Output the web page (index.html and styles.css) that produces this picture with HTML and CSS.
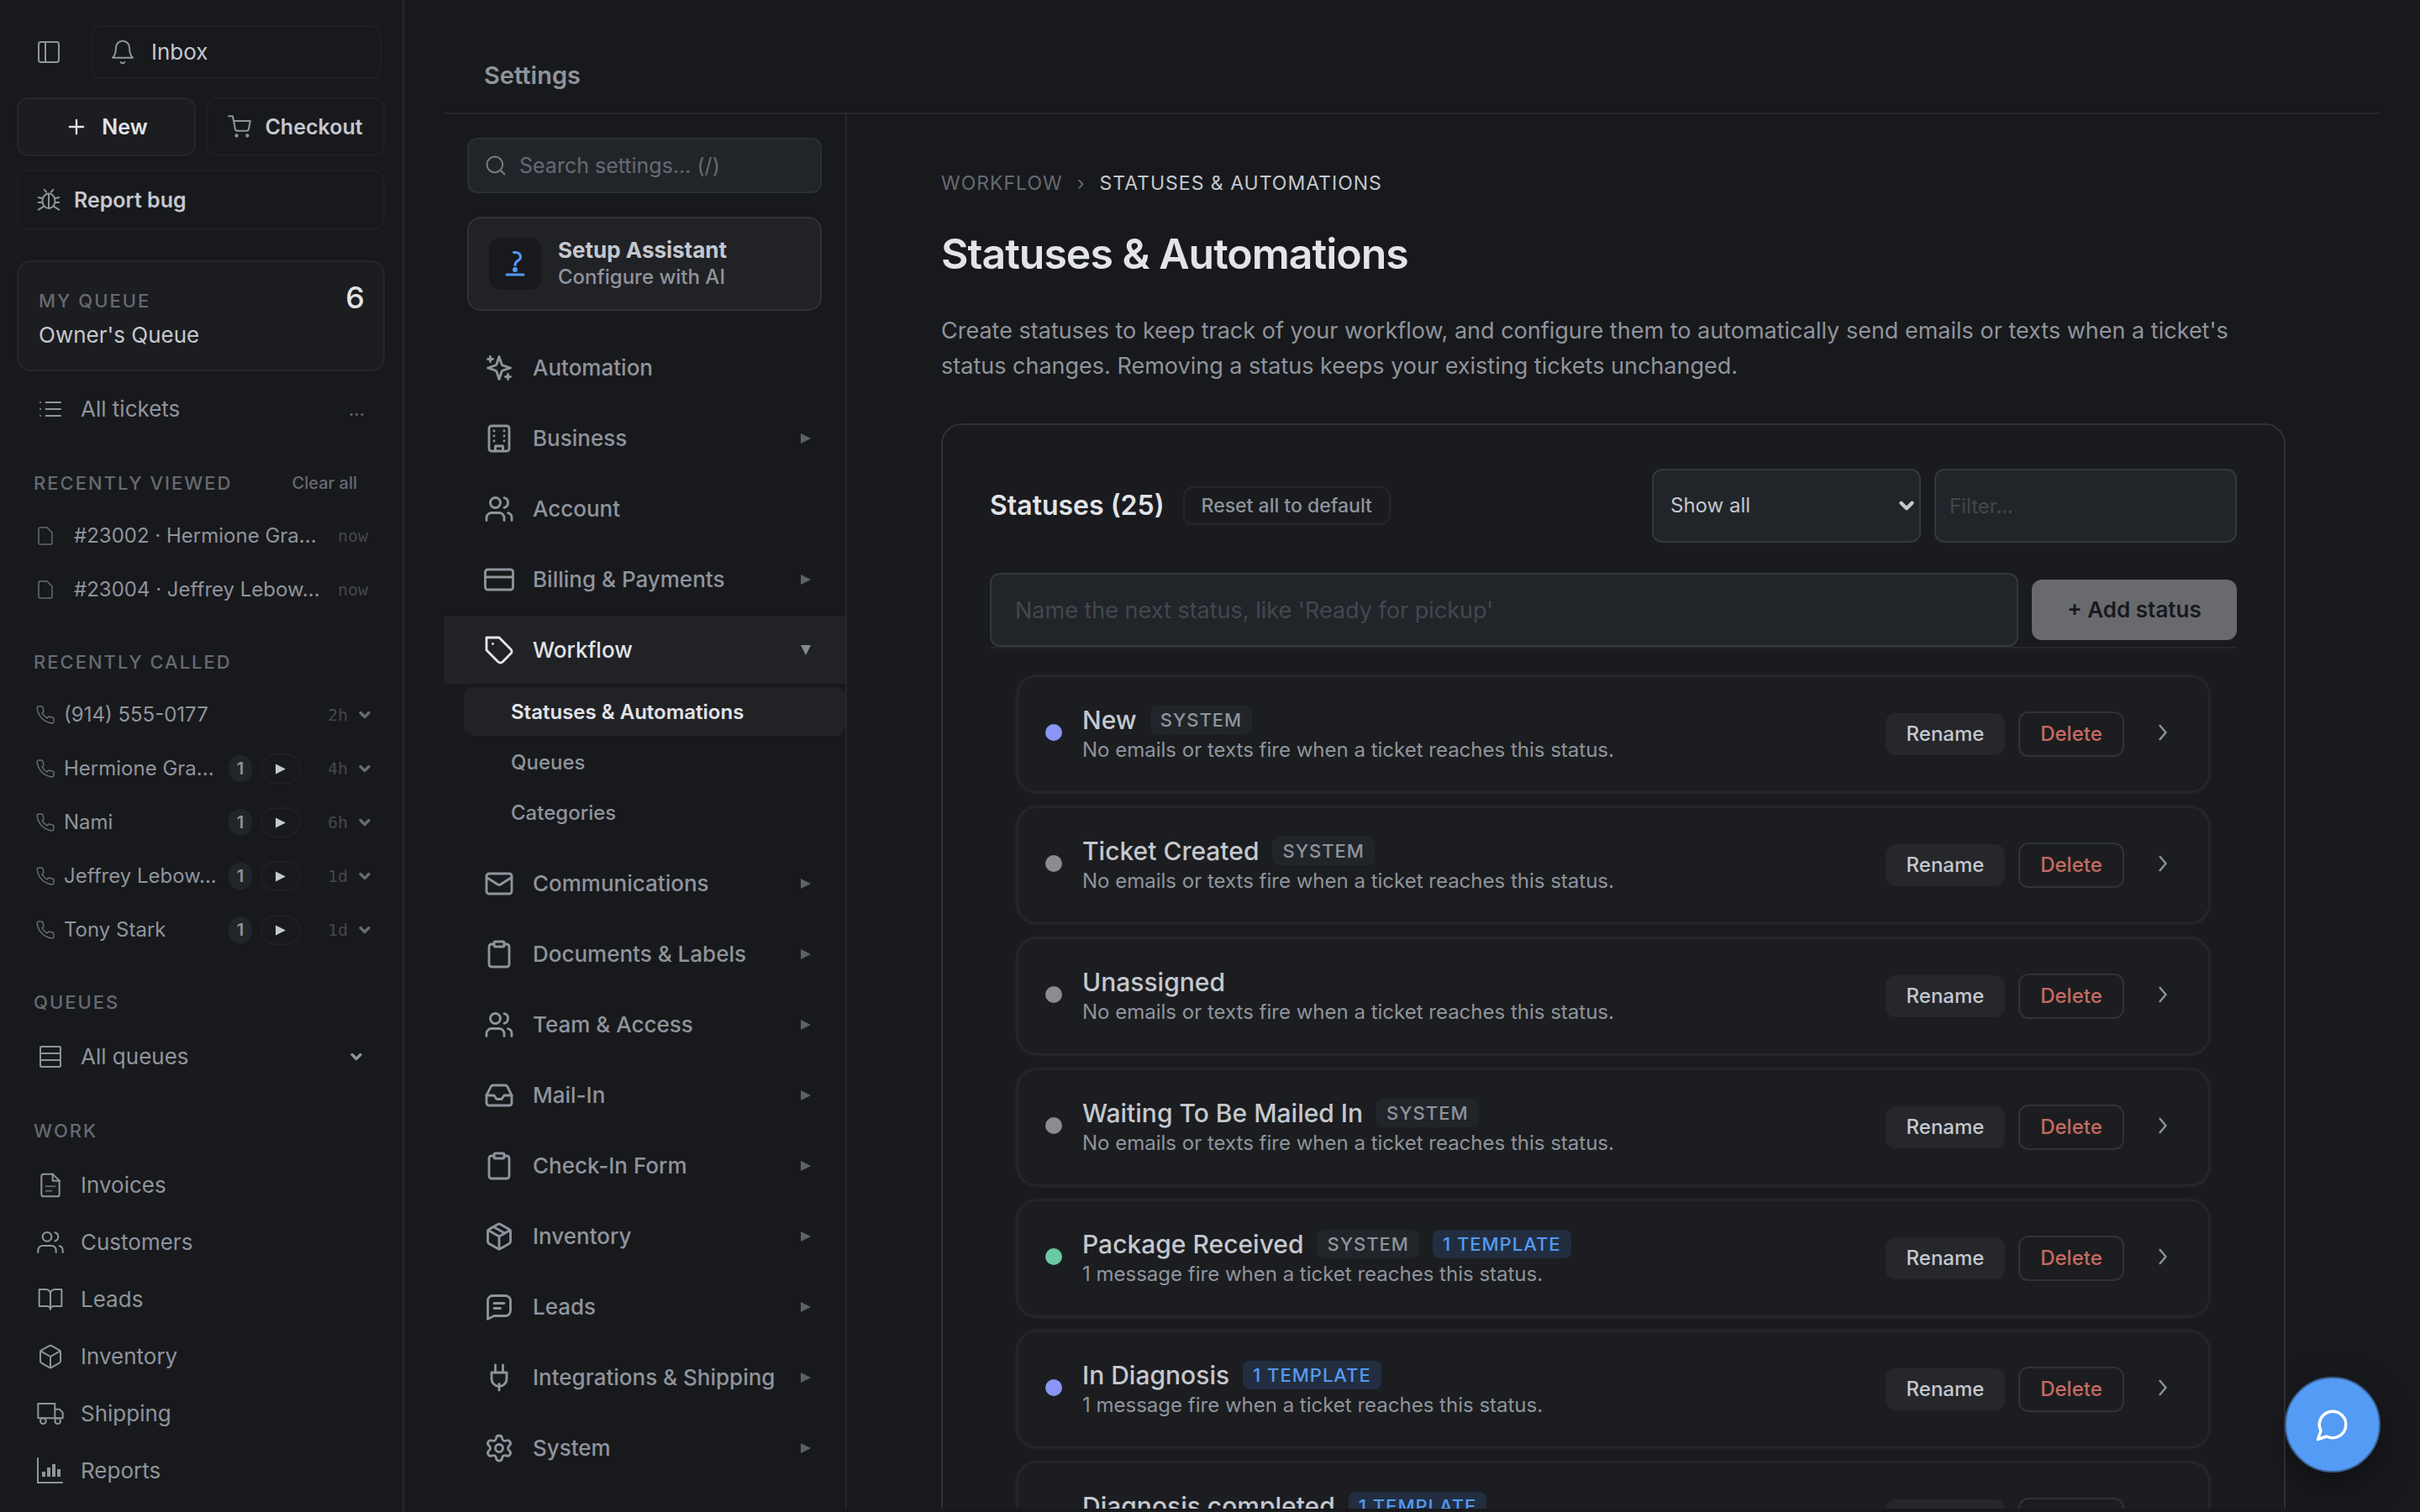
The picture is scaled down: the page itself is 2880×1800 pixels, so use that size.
FILE: index.html
```html
<!DOCTYPE html>
<html lang="en">
<head>
<meta charset="utf-8">
<meta name="viewport" content="width=device-width, initial-scale=1">
<title>Settings - Statuses &amp; Automations</title>
<link rel="stylesheet" href="styles.css">
</head>
<body>
<svg class="sprite" aria-hidden="true">
  <symbol id="i-panel" viewBox="0 0 24 24"><rect x="3" y="3" width="18" height="18" rx="2"/><path d="M9 3v18"/></symbol>
  <symbol id="i-bell" viewBox="0 0 24 24"><path d="M18 8A6 6 0 0 0 6 8c0 7-3 9-3 9h18s-3-2-3-9"/><path d="M13.73 21a2 2 0 0 1-3.46 0"/></symbol>
  <symbol id="i-plus" viewBox="0 0 24 24"><path d="M12 5v14M5 12h14"/></symbol>
  <symbol id="i-cart" viewBox="0 0 24 24"><circle cx="9" cy="21" r="1"/><circle cx="20" cy="21" r="1"/><path d="M1 1h4l2.68 13.39a2 2 0 0 0 2 1.61h9.72a2 2 0 0 0 2-1.61L23 6H6"/></symbol>
  <symbol id="i-bug" viewBox="0 0 24 24"><ellipse cx="12" cy="13" rx="6.5" ry="7.5"/><path d="M12 5.500v15M9.500 4 7.500 1.500M14.500 4l2-2.500M6 10.500 1.500 9.500M5.500 14.500h-4M7 18.500l-5.500 3.500M18 10.500l4.500-1M18.500 14.500h4M17 18.500l5.500 3.500"/></symbol>
  <symbol id="i-list" viewBox="0 0 24 24"><path d="M8 6h13M8 12h13M8 18h13M3 6h.01M3 12h.01M3 18h.01"/></symbol>
  <symbol id="i-page" viewBox="0 0 24 24"><path d="M14 2H6a2 2 0 0 0-2 2v16a2 2 0 0 0 2 2h12a2 2 0 0 0 2-2V8z"/></symbol>
  <symbol id="i-phone" viewBox="0 0 24 24"><path d="M22 16.92v3a2 2 0 0 1-2.18 2 19.79 19.79 0 0 1-8.63-3.07 19.5 19.5 0 0 1-6-6 19.79 19.79 0 0 1-3.07-8.67A2 2 0 0 1 4.11 2h3a2 2 0 0 1 2 1.72c.13.96.36 1.9.7 2.81a2 2 0 0 1-.45 2.11L8.09 9.91a16 16 0 0 0 6 6l1.27-1.27a2 2 0 0 1 2.11-.45c.91.34 1.85.57 2.81.7A2 2 0 0 1 22 16.92z"/></symbol>
  <symbol id="i-chevron" viewBox="0 0 24 24"><path d="m6 9 6 6 6-6"/></symbol>
  <symbol id="i-right" viewBox="0 0 24 24"><path d="m9 5 6 7-6 7"/></symbol>
  <symbol id="i-tri" viewBox="0 0 12 12"><path d="M0 0 12 6 0 12z"/></symbol>
  <symbol id="i-rows" viewBox="0 0 24 24"><rect x="3" y="3" width="18" height="6" rx="1"/><rect x="3" y="9" width="18" height="6" rx="1"/><rect x="3" y="15" width="18" height="6" rx="1"/></symbol>
  <symbol id="i-invoice" viewBox="0 0 24 24"><path d="M14 2H6a2 2 0 0 0-2 2v16a2 2 0 0 0 2 2h12a2 2 0 0 0 2-2V8z"/><path d="M14 2v6h6"/><path d="M8 13h8M8 17h5" opacity=".6"/></symbol>
  <symbol id="i-customers" viewBox="0 0 24 24"><path d="M17 21v-2a4 4 0 0 0-4-4H5a4 4 0 0 0-4 4v2"/><circle cx="9" cy="7" r="4"/><path d="M23 21v-2a4 4 0 0 0-3-3.87M16 3.13a4 4 0 0 1 0 7.75"/></symbol>
  <symbol id="i-book" viewBox="0 0 24 24"><path d="M2 3h6a4 4 0 0 1 4 4v14a3 3 0 0 0-3-3H2zM22 3h-6a4 4 0 0 0-4 4v14a3 3 0 0 1 3-3h7z"/></symbol>
  <symbol id="i-box" viewBox="0 0 24 24"><path d="M21 16V8a2 2 0 0 0-1-1.73l-7-4a2 2 0 0 0-2 0l-7 4A2 2 0 0 0 3 8v8a2 2 0 0 0 1 1.73l7 4a2 2 0 0 0 2 0l7-4A2 2 0 0 0 21 16z"/><path d="M3.3 7 12 12l8.7-5M12 22V12"/></symbol>
  <symbol id="i-truck" viewBox="0 0 24 24"><path d="M1 3h15v13H1zM16 8h4l3 3v5h-7z"/><circle cx="5.5" cy="18.5" r="2.5"/><circle cx="18.5" cy="18.5" r="2.5"/></symbol>
  <symbol id="i-chart" viewBox="0 0 32 32"><path d="M1 1v29h29"/><path d="M8 17v6M14 12v11M20 8v15M26 14v9" stroke-width="4" stroke-linecap="butt"/></symbol>
  <symbol id="i-search" viewBox="0 0 24 24"><circle cx="11" cy="11" r="8"/><path d="m21 21-4.35-4.35"/></symbol>
  <symbol id="i-assist" viewBox="0 0 62 62"><path d="M29.500 17.500c4.500-.5 8 1.500 8 5.500 0 5-6.500 3.500-6.500 9.500"/><path d="M21 44h20"/><circle cx="31" cy="38" r="1.500"/></symbol>
  <symbol id="i-sparkles" viewBox="0 0 24 24"><path d="m12 3-1.912 5.813a2 2 0 0 1-1.275 1.275L3 12l5.813 1.912a2 2 0 0 1 1.275 1.275L12 21l1.912-5.813a2 2 0 0 1 1.275-1.275L21 12l-5.813-1.912a2 2 0 0 1-1.275-1.275L12 3Z"/><path d="M5 3v4M19 17v4M3 5h4M17 19h4"/></symbol>
  <symbol id="i-building" viewBox="0 0 24 24"><rect x="4" y="2" width="16" height="20" rx="2"/><path d="M9 22v-4h6v4M8 6h.01M16 6h.01M8 10h.01M16 10h.01M8 14h.01M16 14h.01"/></symbol>
  <symbol id="i-users" viewBox="0 0 24 24"><path d="M16 21v-2a4 4 0 0 0-4-4H6a4 4 0 0 0-4 4v2"/><circle cx="9" cy="7" r="4"/><path d="M22 21v-2a4 4 0 0 0-3-3.87M16 3.13a4 4 0 0 1 0 7.75"/></symbol>
  <symbol id="i-card" viewBox="0 0 24 24"><rect x="1" y="4" width="22" height="16" rx="2"/><path d="M1 10h22"/></symbol>
  <symbol id="i-tag" viewBox="0 0 24 24"><path d="M12 2H2v10l9.29 9.29c.94.94 2.48.94 3.42 0l6.58-6.58c.94-.94.94-2.48 0-3.42L12 2Z"/><path d="M7 7h.01"/></symbol>
  <symbol id="i-mail" viewBox="0 0 24 24"><rect x="2" y="4" width="20" height="16" rx="2"/><path d="m22 7-8.97 5.7a1.94 1.94 0 0 1-2.06 0L2 7"/></symbol>
  <symbol id="i-clipboard" viewBox="0 0 24 24"><rect x="8" y="2" width="8" height="4" rx="1"/><path d="M16 4h2a2 2 0 0 1 2 2v14a2 2 0 0 1-2 2H6a2 2 0 0 1-2-2V6a2 2 0 0 1 2-2h2"/></symbol>
  <symbol id="i-inbox" viewBox="0 0 24 24"><path d="M22 12h-6l-2 3h-4l-2-3H2"/><path d="M5.45 5.11 2 12v6a2 2 0 0 0 2 2h16a2 2 0 0 0 2-2v-6l-3.45-6.89A2 2 0 0 0 16.76 4H7.24a2 2 0 0 0-1.79 1.11z"/></symbol>
  <symbol id="i-package" viewBox="0 0 24 24"><path d="M21 8a2 2 0 0 0-1-1.73l-7-4a2 2 0 0 0-2 0l-7 4A2 2 0 0 0 3 8v8a2 2 0 0 0 1 1.73l7 4a2 2 0 0 0 2 0l7-4A2 2 0 0 0 21 16Z"/><path d="m3.3 7 8.7 5 8.7-5M12 22V12M7.5 4.27l9 5.15"/></symbol>
  <symbol id="i-message" viewBox="0 0 24 24"><path d="M3 21.500V7a4 4 0 0 1 4-4h10a4 4 0 0 1 4 4v8a4 4 0 0 1-4 4H8z"/><path d="M8 9h8M8 13h5"/></symbol>
  <symbol id="i-plug" viewBox="0 0 24 24"><path d="M9 8V2M15 8V2M12 22v-5M6 8h12v5a6 6 0 0 1-12 0z"/></symbol>
  <symbol id="i-gear" viewBox="0 0 24 24"><path d="M9.671 4.136a2.34 2.34 0 0 1 4.659 0 2.34 2.34 0 0 0 3.319 1.915 2.34 2.34 0 0 1 2.33 4.033 2.34 2.34 0 0 0 0 3.831 2.34 2.34 0 0 1-2.33 4.033 2.34 2.34 0 0 0-3.319 1.915 2.34 2.34 0 0 1-4.659 0 2.34 2.34 0 0 0-3.32-1.915 2.34 2.34 0 0 1-2.33-4.033 2.34 2.34 0 0 0 0-3.831A2.34 2.34 0 0 1 6.35 6.051a2.34 2.34 0 0 0 3.319-1.915"/><circle cx="12" cy="12" r="3"/></symbol>
  <symbol id="i-chat" viewBox="0 0 24 24"><path d="M7.9 20A9 9 0 1 0 4 16.1L2 22Z"/></symbol>
</svg>

<div class="app">
  <aside class="sidebar">
    <div class="top-row">
      <button class="toggle" type="button" aria-label="Toggle sidebar"><svg class="icon i32"><use href="#i-panel"/></svg></button>
      <a class="inbox" href="#"><svg class="icon i32"><use href="#i-bell"/></svg>Inbox</a>
    </div>
    <div class="action-row">
      <button class="action new" type="button"><svg class="icon i28"><use href="#i-plus"/></svg>New</button>
      <button class="action checkout" type="button"><svg class="icon i28"><use href="#i-cart"/></svg>Checkout</button>
    </div>
    <button class="report" type="button"><svg class="icon i28"><use href="#i-bug"/></svg>Report bug</button>
    <a class="my-queue" href="#">
      <span class="my-queue-text"><span class="eyebrow">MY QUEUE</span><span>Owner's Queue</span></span>
      <span class="my-queue-count">6</span>
    </a>
    <a class="side-link all-tickets" href="#"><svg class="icon i32"><use href="#i-list"/></svg>All tickets<span class="trail more">...</span></a>

    <section class="side-section">
      <h2 class="side-label">RECENTLY VIEWED <button class="clear" type="button">Clear all</button></h2>
      <a class="recent" href="#"><svg class="icon i24"><use href="#i-page"/></svg><span class="name">#23002 · Hermione Gra...</span><span class="time">now</span></a>
      <a class="recent" href="#"><svg class="icon i24"><use href="#i-page"/></svg><span class="name">#23004 · Jeffrey Lebow...</span><span class="time">now</span></a>
    </section>

    <section class="side-section">
      <h2 class="side-label">RECENTLY CALLED</h2>
      <div class="call"><svg class="icon i24"><use href="#i-phone"/></svg><span class="name">(914) 555-0177</span><span class="time">2h</span><svg class="icon caret"><use href="#i-chevron"/></svg></div>
      <div class="call"><svg class="icon i24"><use href="#i-phone"/></svg><span class="name">Hermione Gra...</span><span class="count">1</span><button class="play" type="button" aria-label="Play voicemail"><svg class="tri"><use href="#i-tri"/></svg></button><span class="time">4h</span><svg class="icon caret"><use href="#i-chevron"/></svg></div>
      <div class="call"><svg class="icon i24"><use href="#i-phone"/></svg><span class="name">Nami</span><span class="count">1</span><button class="play" type="button" aria-label="Play voicemail"><svg class="tri"><use href="#i-tri"/></svg></button><span class="time">6h</span><svg class="icon caret"><use href="#i-chevron"/></svg></div>
      <div class="call"><svg class="icon i24"><use href="#i-phone"/></svg><span class="name">Jeffrey Lebow...</span><span class="count">1</span><button class="play" type="button" aria-label="Play voicemail"><svg class="tri"><use href="#i-tri"/></svg></button><span class="time">1d</span><svg class="icon caret"><use href="#i-chevron"/></svg></div>
      <div class="call"><svg class="icon i24"><use href="#i-phone"/></svg><span class="name">Tony Stark</span><span class="count">1</span><button class="play" type="button" aria-label="Play voicemail"><svg class="tri"><use href="#i-tri"/></svg></button><span class="time">1d</span><svg class="icon caret"><use href="#i-chevron"/></svg></div>
    </section>

    <section class="side-section">
      <h2 class="side-label">QUEUES</h2>
      <a class="side-link" href="#"><svg class="icon i32"><use href="#i-rows"/></svg>All queues<svg class="icon caret trail"><use href="#i-chevron"/></svg></a>
    </section>

    <section class="side-section">
      <h2 class="side-label">WORK</h2>
      <a class="side-link" href="#"><svg class="icon i32"><use href="#i-invoice"/></svg>Invoices</a>
      <a class="side-link" href="#"><svg class="icon i32"><use href="#i-customers"/></svg>Customers</a>
      <a class="side-link" href="#"><svg class="icon i32"><use href="#i-book"/></svg>Leads</a>
      <a class="side-link" href="#"><svg class="icon i32"><use href="#i-box"/></svg>Inventory</a>
      <a class="side-link" href="#"><svg class="icon i32"><use href="#i-truck"/></svg>Shipping</a>
      <a class="side-link" href="#"><svg class="icon i32 chart"><use href="#i-chart"/></svg>Reports</a>
    </section>
  </aside>

  <div class="workspace">
    <header class="page-head">Settings</header>
    <div class="columns">
      <nav class="settings-nav" aria-label="Settings">
        <label class="search"><svg class="icon i28"><use href="#i-search"/></svg><input type="search" placeholder="Search settings... (/)" aria-label="Search settings"></label>
        <a class="assistant" href="#">
          <span class="assistant-icon"><svg class="icon"><use href="#i-assist"/></svg></span>
          <span class="assistant-text"><strong>Setup Assistant</strong><span>Configure with AI</span></span>
        </a>
        <a class="nav-item" href="#"><svg class="icon i36"><use href="#i-sparkles"/></svg>Automation</a>
        <a class="nav-item" href="#"><svg class="icon i36"><use href="#i-building"/></svg>Business<svg class="tri"><use href="#i-tri"/></svg></a>
        <a class="nav-item" href="#"><svg class="icon i36"><use href="#i-users"/></svg>Account</a>
        <a class="nav-item" href="#"><svg class="icon i36"><use href="#i-card"/></svg>Billing &amp; Payments<svg class="tri"><use href="#i-tri"/></svg></a>
        <a class="nav-item open" href="#"><svg class="icon i36"><use href="#i-tag"/></svg>Workflow<svg class="tri"><use href="#i-tri"/></svg></a>
        <div class="sub-nav">
          <a class="sub-item current" href="#">Statuses &amp; Automations</a>
          <a class="sub-item" href="#">Queues</a>
          <a class="sub-item" href="#">Categories</a>
        </div>
        <a class="nav-item" href="#"><svg class="icon i36"><use href="#i-mail"/></svg>Communications<svg class="tri"><use href="#i-tri"/></svg></a>
        <a class="nav-item" href="#"><svg class="icon i36"><use href="#i-clipboard"/></svg>Documents &amp; Labels<svg class="tri"><use href="#i-tri"/></svg></a>
        <a class="nav-item" href="#"><svg class="icon i36"><use href="#i-users"/></svg>Team &amp; Access<svg class="tri"><use href="#i-tri"/></svg></a>
        <a class="nav-item" href="#"><svg class="icon i36"><use href="#i-inbox"/></svg>Mail-In<svg class="tri"><use href="#i-tri"/></svg></a>
        <a class="nav-item" href="#"><svg class="icon i36"><use href="#i-clipboard"/></svg>Check-In Form<svg class="tri"><use href="#i-tri"/></svg></a>
        <a class="nav-item" href="#"><svg class="icon i36"><use href="#i-package"/></svg>Inventory<svg class="tri"><use href="#i-tri"/></svg></a>
        <a class="nav-item" href="#"><svg class="icon i36"><use href="#i-message"/></svg>Leads<svg class="tri"><use href="#i-tri"/></svg></a>
        <a class="nav-item" href="#"><svg class="icon i36"><use href="#i-plug"/></svg>Integrations &amp; Shipping<svg class="tri"><use href="#i-tri"/></svg></a>
        <a class="nav-item" href="#"><svg class="icon i36"><use href="#i-gear"/></svg>System<svg class="tri"><use href="#i-tri"/></svg></a>
      </nav>

      <main class="content">
        <div class="content-inner">
          <div class="crumbs"><a href="#">WORKFLOW</a><span class="sep">›</span><span class="here">STATUSES &amp; AUTOMATIONS</span></div>
          <h1>Statuses &amp; Automations</h1>
          <p class="intro">Create statuses to keep track of your workflow, and configure them to automatically send emails or texts when a ticket's status changes. Removing a status keeps your existing tickets unchanged.</p>

          <section class="card">
            <div class="card-head">
              <h2>Statuses (25)</h2>
              <button class="reset" type="button">Reset all to default</button>
              <div class="select-wrap"><select aria-label="Show"><option>Show all</option></select><svg class="icon"><use href="#i-chevron"/></svg></div>
              <input class="filter" type="text" placeholder="Filter..." aria-label="Filter statuses">
            </div>
            <form class="add-row">
              <input type="text" placeholder="Name the next status, like 'Ready for pickup'" aria-label="Status name">
              <button type="button">+ Add status</button>
            </form>
            <ul class="statuses">
              <li class="status"><span class="dot indigo"></span><div class="status-text"><div class="status-title">New<span class="badge">SYSTEM</span></div><p>No emails or texts fire when a ticket reaches this status.</p></div><button class="rename" type="button">Rename</button><button class="delete" type="button">Delete</button><svg class="icon go"><use href="#i-right"/></svg></li>
              <li class="status"><span class="dot"></span><div class="status-text"><div class="status-title">Ticket Created<span class="badge">SYSTEM</span></div><p>No emails or texts fire when a ticket reaches this status.</p></div><button class="rename" type="button">Rename</button><button class="delete" type="button">Delete</button><svg class="icon go"><use href="#i-right"/></svg></li>
              <li class="status"><span class="dot"></span><div class="status-text"><div class="status-title">Unassigned</div><p>No emails or texts fire when a ticket reaches this status.</p></div><button class="rename" type="button">Rename</button><button class="delete" type="button">Delete</button><svg class="icon go"><use href="#i-right"/></svg></li>
              <li class="status"><span class="dot"></span><div class="status-text"><div class="status-title">Waiting To Be Mailed In<span class="badge">SYSTEM</span></div><p>No emails or texts fire when a ticket reaches this status.</p></div><button class="rename" type="button">Rename</button><button class="delete" type="button">Delete</button><svg class="icon go"><use href="#i-right"/></svg></li>
              <li class="status"><span class="dot green"></span><div class="status-text"><div class="status-title">Package Received<span class="badge">SYSTEM</span><span class="badge template">1 TEMPLATE</span></div><p>1 message fire when a ticket reaches this status.</p></div><button class="rename" type="button">Rename</button><button class="delete" type="button">Delete</button><svg class="icon go"><use href="#i-right"/></svg></li>
              <li class="status"><span class="dot indigo"></span><div class="status-text"><div class="status-title">In Diagnosis<span class="badge template">1 TEMPLATE</span></div><p>1 message fire when a ticket reaches this status.</p></div><button class="rename" type="button">Rename</button><button class="delete" type="button">Delete</button><svg class="icon go"><use href="#i-right"/></svg></li>
              <li class="status"><span class="dot indigo"></span><div class="status-text"><div class="status-title">Diagnosis completed<span class="badge template">1 TEMPLATE</span></div><p>1 message fire when a ticket reaches this status.</p></div><button class="rename" type="button">Rename</button><button class="delete" type="button">Delete</button><svg class="icon go"><use href="#i-right"/></svg></li>
            </ul>
          </section>
        </div>
      </main>
    </div>
  </div>
  <button class="chat" type="button" aria-label="Open chat"><svg class="icon"><use href="#i-chat"/></svg></button>
</div>
</body>
</html>
```

FILE: styles.css
```css
:root {
  --bg: #18191c;
  --card: #1a1b1e;
  --raised: #1c1d20;
  --field: #212529;
  --active: #212226;
  --line: #26272b;
  --line-soft: #1f2023;
  --line-strong: #303236;
  --text: #e2e4e8;
  --text-2: #c4c8cf;
  --text-3: #8f949d;
  --text-4: #666a73;
  --text-5: #43474f;
  --blue: #539bf5;
}

* { box-sizing: border-box; }

body {
  margin: 0;
  background: var(--bg);
  color: var(--text-3);
  font: 400 26px/32px Inter, "Liberation Sans", sans-serif;
}

button, input, select { font: inherit; color: inherit; margin: 0; }
button { background: none; border: 0; padding: 0; white-space: nowrap; }
a { color: inherit; text-decoration: none; }
h1, h2, p, ul { margin: 0; padding: 0; }
input::placeholder { color: var(--text-5); opacity: 1; }

.sprite { display: none; }
.icon {
  flex: none;
  fill: none;
  stroke: currentColor;
  stroke-width: 1.5;
  stroke-linecap: round;
  stroke-linejoin: round;
}
.i24 { width: 24px; height: 24px; }
.i28 { width: 28px; height: 28px; stroke-width: 1.7; }
.i32 { width: 32px; height: 32px; }
.i36 { width: 36px; height: 36px; stroke-width: 1.9; }
.tri { flex: none; width: 12px; height: 12px; fill: currentColor; }

.app { display: flex; height: 100vh; overflow: hidden; }

/* Sidebar */
.sidebar {
  flex: none;
  width: 482px;
  padding: 30px 20px 0;
  border-right: 4px solid #222327;
  overflow: hidden;
}
.top-row { display: flex; align-items: center; gap: 34px; padding: 0 4px 0 22px; }
.toggle { display: flex; }
.inbox {
  flex: 1;
  display: flex;
  align-items: center;
  gap: 18px;
  height: 64px;
  padding: 0 20px;
  border: 2px solid var(--line-soft);
  border-radius: 12px;
  color: var(--text-2);
}
.inbox .icon, .checkout .icon, .report .icon { color: var(--text-3); }
.action-row { display: flex; gap: 12px; margin-top: 22px; }
.action {
  flex: 1;
  display: flex;
  align-items: center;
  justify-content: center;
  gap: 16px;
  height: 70px;
  border: 2px solid var(--line-soft);
  border-radius: 14px;
  color: var(--text-2);
  font-size: 25px;
  font-weight: 600;
}
.new { background: var(--raised); border-color: var(--line); color: var(--text); }
.new .icon { stroke-width: 2; }
.report {
  display: flex;
  align-items: center;
  gap: 16px;
  width: 100%;
  height: 72px;
  margin-top: 16px;
  padding: 0 22px;
  border: 2px solid var(--line-soft);
  border-radius: 14px;
  color: var(--text-2);
  font-size: 25px;
  font-weight: 600;
}
.my-queue {
  display: flex;
  justify-content: space-between;
  height: 132px;
  margin-top: 36px;
  padding: 26px 22px 0 24px;
  background: var(--raised);
  border: 2px solid var(--line);
  border-radius: 16px;
  color: var(--text-2);
}
.my-queue-text { display: flex; flex-direction: column; gap: 9px; padding-top: 4px; }
.eyebrow { color: var(--text-4); font-size: 22px; font-weight: 500; letter-spacing: 2px; }
.my-queue-count { color: var(--text); font-size: 36px; font-weight: 500; }

.side-link { display: flex; align-items: center; gap: 20px; height: 68px; padding: 0 24px; }
.all-tickets { margin-top: 11px; }
.trail { margin-left: auto; }
.more { color: var(--text-4); font-size: 22px; }
.side-section { margin-top: 40px; }
.side-label {
  display: flex;
  justify-content: space-between;
  margin-bottom: 17px;
  padding: 0 33px 0 20px;
  color: var(--text-4);
  font-size: 22px;
  font-weight: 500;
  line-height: 28px;
  letter-spacing: 2px;
}
.clear { font-size: 20px; letter-spacing: 0; }
.recent, .call { display: flex; align-items: center; height: 64px; font-size: 24px; }
.recent { gap: 22px; padding: 0 20px 0 22px; }
.call { gap: 10px; padding: 0 14px 0 22px; }
.recent .icon, .call .i24, .call .caret { color: var(--text-4); }
.name { flex: 1; min-width: 0; white-space: nowrap; }
.time { color: var(--text-5); font: 20px/28px "DejaVu Sans Mono", monospace; }
.call .time { width: 46px; text-align: right; }
.caret { width: 20px; height: 20px; stroke-width: 4; }
.count {
  width: 28px;
  border-radius: 14px;
  background: var(--field);
  font-size: 20px;
  font-weight: 600;
  text-align: center;
}
.play {
  display: flex;
  align-items: center;
  justify-content: center;
  width: 48px;
  height: 36px;
  border: 2px solid var(--line-soft);
  border-radius: 18px;
  color: var(--text-2);
}
.play .tri { height: 15px; }
.chart { stroke-width: 2; stroke-linejoin: miter; }

/* Workspace */
.workspace { flex: 1; min-width: 0; display: flex; flex-direction: column; padding: 0 48px 4px 46px; }
.page-head {
  flex: none;
  height: 136px;
  padding: 74px 48px 0;
  border-bottom: 2px solid var(--line);
  font-size: 29px;
  font-weight: 600;
}
.columns { flex: 1; min-height: 0; display: flex; }

.settings-nav {
  flex: none;
  width: 480px;
  padding-top: 28px;
  border-right: 2px solid var(--line);
  overflow: hidden;
  font-weight: 500;
}
.search {
  display: flex;
  align-items: center;
  gap: 14px;
  height: 66px;
  margin: 0 28px;
  padding: 0 18px;
  background: var(--field);
  border: 2px solid #2b2f33;
  border-radius: 12px;
  font-size: 25px;
  font-weight: 400;
}
.search .icon { color: #777b82; }
.search input { flex: 1; min-width: 0; padding: 0; background: none; border: 0; outline: 0; }
.search input::placeholder { color: var(--text-4); }
.assistant {
  display: flex;
  align-items: center;
  gap: 20px;
  height: 112px;
  margin: 28px 28px;
  padding: 0 24px;
  background: var(--active);
  border: 2px solid var(--line-strong);
  border-radius: 16px;
}
.assistant-icon { width: 62px; height: 62px; border-radius: 14px; background: var(--bg); color: var(--blue); }
.assistant-icon .icon { width: 62px; height: 62px; stroke-width: 3; }
.assistant-text { display: flex; flex-direction: column; font-size: 24px; }
.assistant-text strong { color: var(--text-2); font-size: 26px; font-weight: 700; }

.nav-item {
  display: flex;
  align-items: center;
  gap: 22px;
  height: 80px;
  margin-bottom: 4px;
  padding: 0 41px 0 48px;
  white-space: nowrap;
}
.nav-item .tri { margin-left: auto; color: #5c6167; }
.nav-item.open { background: var(--active); color: var(--text); }
.nav-item.open .tri { transform: rotate(90deg); color: #85888d; }
.sub-nav { display: grid; gap: 2px; margin-bottom: 16px; padding-left: 24px; font-size: 24px; }
.sub-item { padding: 14px 56px 12px; border-radius: 12px; }
.sub-item.current { background: var(--active); color: var(--text); font-weight: 600; }

.content { flex: 1; min-width: 0; overflow: hidden; padding: 65px 56px 0; }
.content-inner { max-width: 1600px; margin: 0 auto; }
.crumbs { display: flex; gap: 17px; font-size: 23px; line-height: 34px; letter-spacing: 1px; color: var(--text-4); }
.crumbs .here { color: var(--text-2); }
h1 { margin-top: 33px; color: var(--text); font-size: 50px; font-weight: 600; line-height: 68px; letter-spacing: -1px; }
.intro { margin-top: 37px; font-size: 27px; line-height: 42px; }

.card {
  margin-top: 47px;
  padding: 52px 56px;
  background: var(--card);
  border: 2px solid var(--line-strong);
  border-radius: 24px;
}
.card-head { display: flex; align-items: center; gap: 16px; }
.card-head h2 { color: var(--text); font-size: 32px; font-weight: 600; margin-right: 6px; }
.reset {
  height: 46px;
  padding: 0 20px;
  border: 2px solid var(--line);
  border-radius: 12px;
  font-size: 23px;
  font-weight: 500;
}
.select-wrap { display: grid; align-items: center; width: 320px; margin-left: auto; color: var(--text-2); }
.select-wrap > * { grid-area: 1 / 1; }
.select-wrap .icon { width: 26px; height: 26px; margin-right: 4px; justify-self: end; stroke-width: 4; pointer-events: none; }
select, .filter, .add-row input {
  height: 88px;
  padding: 0 20px;
  background: var(--field);
  border: 2px solid #34383c;
  border-radius: 12px;
  outline: 0;
  font-size: 24px;
}
select { appearance: none; width: 100%; }
.filter { width: 360px; padding: 0 16px; }
.add-row { display: flex; align-items: center; gap: 16px; margin-top: 36px; border-bottom: 2px solid var(--line); }
.add-row input { flex: 1; min-width: 0; padding: 0 28px; font-size: 27px; }
.add-row button {
  width: 244px;
  height: 72px;
  border-radius: 12px;
  background: #696a6e;
  color: var(--bg);
  font-weight: 600;
}

.statuses { display: grid; gap: 16px; margin-top: 32px; padding: 0 32px; list-style: none; }
.status {
  display: flex;
  align-items: center;
  gap: 16px;
  height: 140px;
  padding: 0 40px 0 32px;
  background: var(--raised);
  border: 2px solid var(--line);
  border-radius: 24px;
  box-shadow: 0 0 0 2px #202125;
}
.dot { flex: none; width: 20px; height: 20px; margin: 0 8px 4px 0; border-radius: 50%; background: #8b8b92; }
.dot.indigo { background: #8b95f6; }
.dot.green { background: #6bc9a3; }
.status-text { flex: 1; min-width: 0; font-size: 24px; line-height: 34px; }
.status-title { display: flex; align-items: center; gap: 16px; line-height: 38px; color: var(--text-2); font-size: 30px; font-weight: 500; }
.badge {
  padding: 0 12px;
  border-radius: 8px;
  background: var(--field);
  color: var(--text-3);
  font-size: 22px;
  font-weight: 500;
  line-height: 34px;
  letter-spacing: 1px;
}
.badge.template { background: #222e40; color: var(--blue); }
.rename, .delete { border-radius: 12px; font-size: 24px; font-weight: 500; }
.rename { width: 142px; height: 50px; background: #26272b; color: var(--text-2); }
.delete { width: 126px; height: 54px; border: 2px solid var(--line-strong); color: #c46a60; }
.go { width: 28px; height: 28px; margin: 0 0 4px 16px; stroke-width: 2; }

.chat {
  position: fixed;
  right: 47px;
  bottom: 47px;
  display: grid;
  place-items: center;
  width: 114px;
  height: 114px;
  border: 2px solid #3a6094;
  border-radius: 50%;
  background: var(--blue);
  color: #fff;
  box-shadow: 0 16px 40px rgba(0, 0, 0, .35);
}
.chat .icon { width: 42px; height: 42px; stroke-width: 2; }
```
